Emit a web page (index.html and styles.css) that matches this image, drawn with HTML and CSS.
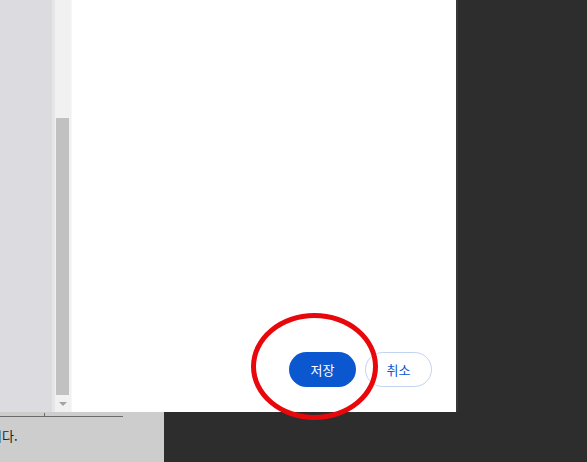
FILE: index.html
```html
<!DOCTYPE html>
<html lang="ko">
<head>
	<meta charset="UTF-8">
	<title>저장</title>
	<link rel="stylesheet" href="styles.css">
</head>
<body>
	<div class="top">
		<div class="side"></div>
		<div class="scroll">
			<div class="track"></div>
			<div class="thumb"></div>
			<div class="arrow"></div>
		</div>
		<div class="dialog">
			<div class="btns">
				<button class="save">저장</button>
				<button class="cancel">취소</button>
				<div class="mark"></div>
			</div>
		</div>
	</div>
	<div class="bottom">
		<div class="status">
			<div class="rule"><span class="tick"></span></div>
			<p class="msg">니다.</p>
		</div>
	</div>
</body>
</html>
```

FILE: styles.css
```css
html,body{
	margin:0;
	padding:0;
}
body{
	width:587px;
	height:462px;
	overflow:hidden;
	background:#2d2d2d;
	font-family:"Noto Sans CJK KR","Noto Sans",sans-serif;
}
.top{display:flex;height:412px;}
.side{width:52px;background:#dcdce0;border-right:3px solid #e6e6e8;}
.scroll{width:15px;background:#f1f1f1;display:flex;flex-direction:column;padding:0 1px 0 0;border-right:1px solid #f7f7f7;}
.track{height:118px;}
.thumb{flex:1;background:#c1c1c1;margin:0 1px;}
.arrow{height:17px;display:flex;justify-content:center;align-items:center;}
.arrow::before{content:'';border-left:4px solid transparent;border-right:4px solid transparent;border-top:4px solid #a3a3a3;}
.dialog{width:384px;background:#fff;display:flex;align-items:flex-end;justify-content:flex-end;border-right:2px solid #383838;}
.btns{position:relative;display:flex;gap:9px;padding:0 24px 25px 0;}
.btns button{height:35px;width:67px;border-radius:18px;font-family:"Noto Sans CJK KR",sans-serif;font-size:13px;font-weight:400;}
.save{background:#0b57d0;color:#fff;border:none;}
.cancel{background:#fff;color:#0b57d0;border:1px solid #c2d4ee;}
.mark{position:absolute;left:-38px;top:-39px;width:117px;height:97px;border:5px solid #e8070b;border-radius:50%;}
.bottom{height:50px;}
.status{width:164px;height:50px;background:#cdcdcd;overflow:hidden;}
.rule{position:relative;width:123px;height:1px;margin-top:4px;background:#6a6a6a;}
.tick{position:absolute;left:44px;top:-3px;width:1px;height:4px;background:#6a6a6a;}
.msg{margin:9px 0 0 -10px;font-size:13px;color:#222;white-space:nowrap;}
```
